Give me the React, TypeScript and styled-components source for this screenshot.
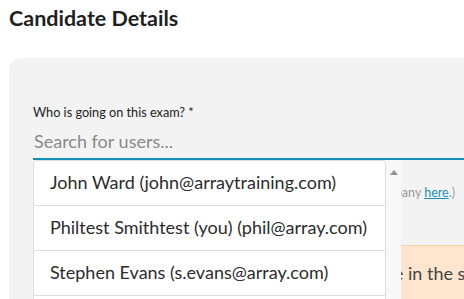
import styled, { createGlobalStyle } from "styled-components";

const users = [
  "John Ward (john@arraytraining.com)",
  "Philtest Smithtest (you) (phil@array.com)",
  "Stephen Evans (s.evans@array.com)",
  "Sarah Jones (sarah@array.com)",
];

const GlobalStyle = createGlobalStyle`
  html, body {
    margin: 0;
    padding: 0;
    background: #ffffff;
    overflow: hidden;
  }

  body {
    font-family: Lato, "Noto Sans", sans-serif;
    color: #222222;
  }
`;

function App() {
  return (
    <>
      <GlobalStyle />
      <Page>
        <Title>Candidate Details</Title>
        <Panel>
          <Field>
            <Label>Who is going on this exam? *</Label>
            <SearchInput placeholder="Search for users..." autoFocus />
            <Below>
              <Hint>
                (Can't find them? Add a new user to your company <Link>here</Link>.)
              </Hint>
              <Notice>Candidates will then receive a place in the summer session.</Notice>
              <Dropdown>
                <List>
                  {users.map((user) => (
                    <Option key={user}>{user}</Option>
                  ))}
                </List>
                <Scrollbar>
                  <ScrollArrow />
                </Scrollbar>
              </Dropdown>
            </Below>
          </Field>
        </Panel>
      </Page>
    </>
  );
}

export default App;

const Page = styled.main`
  display: flex;
  flex-direction: column;

  height: 299px;
  padding-left: 9px;
  overflow: hidden;
`;

const Title = styled.h1`
  margin: 5px 0 0;

  color: #1f1f1f;

  font-size: 21.5px;
  font-weight: 700;
  line-height: 26px;
`;

const Panel = styled.section`
  flex: 1;

  margin-top: 27px;
  padding: 46px 0 0 24px;
  overflow: hidden;

  border-top-left-radius: 12px;

  background-color: #f3f3f3;
`;

const Field = styled.div`
  display: flex;
  flex-direction: column;
`;

const Label = styled.label`
  color: #222222;

  font-size: 12.7px;
  line-height: 16px;
`;

const SearchInput = styled.input`
  height: 34px;
  padding: 4px 0 0 1px;

  border: none;
  border-bottom: 2px solid #1590b5;
  outline: none;

  color: #333333;
  background: transparent;
  caret-color: #222222;

  font-family: inherit;
  font-size: 18px;

  &::placeholder {
    color: #8a8a8a;
  }
`;

const Below = styled.div`
  position: relative;

  display: flex;
  flex-direction: column;
`;

const Hint = styled.p`
  margin: 25px 0 0;
  padding-right: 9px;

  color: #9a9a9a;

  font-size: 12.5px;
  line-height: 15px;
  text-align: right;
  white-space: nowrap;
`;

const Link = styled.a`
  color: #1f8fb0;
  text-decoration: underline;
`;

const Notice = styled.div`
  margin-top: 45px;
  padding: 12px 16px 12px 90px;

  border-top: 1px solid #f7cfa6;

  color: #444444;
  background-color: #fde5cf;

  font-size: 18px;
  line-height: 30px;
  white-space: nowrap;
`;

const Dropdown = styled.div`
  position: absolute;
  top: 0;
  left: 0;

  display: flex;
`;

const List = styled.ul`
  width: 351px;
  margin: 0;
  padding: 0;

  border: 1px solid #dedede;
  border-radius: 4px 4px 0 0;

  background: #ffffff;

  list-style: none;
`;

const Option = styled.li`
  height: 44px;
  padding: 0 16px;

  border-bottom: 1px solid #dedede;

  color: #2c2c2c;

  font-size: 18px;
  line-height: 43px;
  white-space: nowrap;
`;

const Scrollbar = styled.div`
  display: flex;
  justify-content: center;

  width: 15px;
  padding-top: 10px;

  background-color: #f8f8f8;
`;

const ScrollArrow = styled.span`
  width: 0;
  height: 0;

  border-right: 4px solid transparent;
  border-bottom: 5px solid #8f8f8f;
  border-left: 4px solid transparent;
`;
